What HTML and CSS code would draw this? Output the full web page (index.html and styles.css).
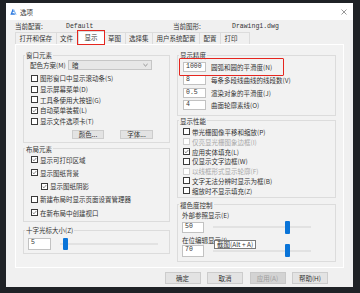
FILE: index.html
```
<!DOCTYPE html>
<html lang="zh-CN">
<head>
    <meta charset="UTF-8">
    <meta name="viewport" content="width=device-width, initial-scale=1.0">
    <title>选项</title>
    <link rel="stylesheet" href="styles.css">
</head>
<body>
    <div class="dialog">
        <div class="titlebar">
            <svg class="app-icon" viewBox="0 0 8 8">
                <path d="M0.4 7.6 L3.1 0.8 L4.6 4.4 L3.3 4.4 L2.7 6 L5.2 6 L5.7 7.6 Z" fill="#2b78df"/>
                <path d="M4.3 0.8 L7.6 7.6 L6.3 7.6 L3.8 2.2 Z" fill="#74afef"/>
            </svg>
            <span class="title">选项</span>
            <svg class="close" viewBox="0 0 6 6">
                <path d="M0.5 0.5 L5.5 5.5 M5.5 0.5 L0.5 5.5" stroke="#6b6b6b" stroke-width="0.7"/>
            </svg>
        </div>

        <div class="profile">
            <span class="profile-label">当前配置:</span>
            <span class="profile-value">Default</span>
            <span class="profile-label wide">当前图形:</span>
            <span class="profile-value">Drawing1.dwg</span>
        </div>

        <div class="tabs">
            <div class="tab">打开和保存</div>
            <div class="tab">文件</div>
            <div class="tab active">显示</div>
            <div class="tab">草图</div>
            <div class="tab">选择集</div>
            <div class="tab">用户系统配置</div>
            <div class="tab">配置</div>
            <div class="tab last">打印</div>
        </div>

        <div class="panel">
            <!-- left column -->
            <div class="col col-left">
                <fieldset class="group g-window">
                    <legend>窗口元素</legend>
                    <div class="scheme-row">
                        <span class="scheme-label">配色方案(M)</span>
                        <div class="select">
                            <span>暗</span>
                            <svg class="chevron" viewBox="0 0 6 4"><path d="M0.5 0.8 L3 3.2 L5.5 0.8" fill="none" stroke="#555" stroke-width="0.7"/></svg>
                        </div>
                    </div>
                    <div class="check-list">
                        <div class="check"><span class="box"></span><span>图形窗口中显示滚动条(S)</span></div>
                        <div class="check"><span class="box"></span><span>显示屏幕菜单(D)</span></div>
                        <div class="check"><span class="box"></span><span>工具条使用大按钮(G)</span></div>
                        <div class="check"><span class="box"><svg viewBox="0 0 7 7"><path d="M1 3.6 L2.8 5.3 L6 1.4" fill="none" stroke="#333" stroke-width="0.8"/></svg></span><span>自动菜单装载(L)</span></div>
                        <div class="check"><span class="box"></span><span>显示文件选项卡(T)</span></div>
                    </div>
                    <div class="btn-row">
                        <div class="btn">颜色...</div>
                        <div class="btn">字体...</div>
                    </div>
                </fieldset>

                <fieldset class="group g-layout">
                    <legend>布局元素</legend>
                    <div class="check"><span class="box"><svg viewBox="0 0 7 7"><path d="M1 3.6 L2.8 5.3 L6 1.4" fill="none" stroke="#333" stroke-width="0.8"/></svg></span><span>显示可打印区域</span></div>
                    <div class="check"><span class="box"><svg viewBox="0 0 7 7"><path d="M1 3.6 L2.8 5.3 L6 1.4" fill="none" stroke="#333" stroke-width="0.8"/></svg></span><span>显示图纸背景</span></div>
                    <div class="check sub"><span class="box"><svg viewBox="0 0 7 7"><path d="M1 3.6 L2.8 5.3 L6 1.4" fill="none" stroke="#333" stroke-width="0.8"/></svg></span><span>显示图纸阴影</span></div>
                    <div class="check"><span class="box"></span><span>新建布局时显示页面设置管理器</span></div>
                    <div class="check"><span class="box"><svg viewBox="0 0 7 7"><path d="M1 3.6 L2.8 5.3 L6 1.4" fill="none" stroke="#333" stroke-width="0.8"/></svg></span><span>在新布局中创建视口</span></div>
                </fieldset>

                <fieldset class="group g-cursor">
                    <legend>十字光标大小(Z)</legend>
                    <div class="slider-row">
                        <div class="field">5</div>
                        <div class="track"><div class="thumb" style="margin-left: 3px"></div></div>
                    </div>
                </fieldset>
            </div>

            <!-- right column -->
            <div class="col col-right">
                <fieldset class="group g-precision">
                    <legend>显示精度</legend>
                    <div class="prec-row hl"><div class="field">1000</div><span>圆弧和圆的平滑度(N)</span></div>
                    <div class="prec-row"><div class="field">8</div><span>每条多段线曲线的线段数(V)</span></div>
                    <div class="prec-row"><div class="field">0.5</div><span>渲染对象的平滑度(J)</span></div>
                    <div class="prec-row"><div class="field">4</div><span>曲面轮廓素线(O)</span></div>
                </fieldset>

                <fieldset class="group g-perf">
                    <legend>显示性能</legend>
                    <div class="check"><span class="box"></span><span>带光栅图像平移和缩放(P)</span></div>
                    <div class="check disabled"><span class="box"></span><span>仅亮显光栅图象边框(I)</span></div>
                    <div class="check"><span class="box"><svg viewBox="0 0 7 7"><path d="M1 3.6 L2.8 5.3 L6 1.4" fill="none" stroke="#333" stroke-width="0.8"/></svg></span><span>应用实体填充(L)</span></div>
                    <div class="check"><span class="box"></span><span>仅显示文字边框(W)</span></div>
                    <div class="check disabled"><span class="box"></span><span>以线框形式显示轮廓(F)</span></div>
                    <div class="check"><span class="box"></span><span>文字无法分辨时显示为框(B)</span></div>
                    <div class="check"><span class="box"></span><span>缩放时不显示填充(Z)</span></div>
                </fieldset>

                <fieldset class="group g-fade">
                    <legend>褪色度控制</legend>
                    <div class="fade-label">外部参照显示(E)</div>
                    <div class="slider-row">
                        <div class="field">50</div>
                        <div class="track"><div class="thumb" style="margin-left: 72px"></div></div>
                    </div>
                    <div class="fade-label tip-anchor">
                        在位编辑显示(I)
                        <div class="tooltip">截图(Alt + A)</div>
                    </div>
                    <div class="slider-row second">
                        <div class="field">70</div>
                        <div class="track"><div class="thumb" style="margin-left: 72px"></div></div>
                    </div>
                </fieldset>
            </div>
        </div>

        <div class="footer">
            <div class="btn">确定</div>
            <div class="btn">取消</div>
            <div class="btn disabled">应用(A)</div>
            <div class="btn">帮助(H)</div>
        </div>
    </div>
</body>
</html>
```

FILE: styles.css
```
* {
    box-sizing: border-box;
}
body {
    margin: 0;
    padding: 3px 0 0 6px;
    width: 360px;
    height: 293px;
    overflow: hidden;
    background-color: #1f2226;
    font-family: "Noto Sans CJK SC", "Liberation Sans", sans-serif;
    font-size: 6.5px;
    color: #333;
}
.dialog {
    width: 347px;
    height: 284px;
    background-color: #f0f0f0;
    display: flex;
    flex-direction: column;
}

/* title bar */
.titlebar {
    height: 17px;
    flex-shrink: 0;
    background-color: #fff;
    display: flex;
    align-items: center;
    padding: 0 6px 0 4px;
}
.app-icon {
    width: 7px;
    height: 7px;
    margin-right: 3px;
}
.title {
    flex: 1;
    color: #333;
}
.close {
    width: 6px;
    height: 6px;
}

/* current profile line */
.profile {
    display: flex;
    height: 9px;
    line-height: 9px;
    margin: 2px 0 0 9px;
    flex-shrink: 0;
}
.profile-label {
    width: 51px;
}
.profile-label.wide {
    width: 59px;
}
.profile-value {
    width: 107px;
    font-family: "Liberation Mono", monospace;
    font-size: 6.5px;
}

/* tabs */
.tabs {
    display: flex;
    align-items: flex-end;
    height: 13px;
    margin-left: 9px;
    flex-shrink: 0;
}
.tab {
    height: 12px;
    line-height: 11px;
    padding: 0 3.5px;
    border: 1px solid #dcdcdc;
    border-bottom: none;
    border-right: none;
    color: #333;
}
.tab.last {
    border-right: 1px solid #dcdcdc;
    padding-right: 11px;
}
.tab.active {
    position: relative;
    z-index: 1;
    height: 13px;
    padding: 0 6px;
    margin-left: 1px;
    background-color: #fff;
    outline: 1.7px solid #e5261f;
}

/* tab page */
.panel {
    margin: 0 9px;
    height: 224px;
    flex-shrink: 0;
    border: 1px solid #fff;
    background-color: #f2f2f2;
    display: flex;
    gap: 7px;
    padding: 6px 7px 0 7px;
}
.col {
    display: flex;
    flex-direction: column;
}
.col-left {
    width: 147px;
}
.col-right {
    width: 159px;
}

.group {
    --pad: 7px;
    margin: 0;
    min-width: 0;
    border: 1px solid #dcdcdc;
    padding: 0 4px 3px var(--pad);
}
.group legend {
    padding: 0 1px;
    margin-left: calc(1px - var(--pad));
    line-height: 8px;
    color: #333;
}

/* window elements */
.g-window {
    padding-top: 1px;
}
.scheme-row {
    display: flex;
    align-items: center;
    height: 10px;
}
.scheme-label {
    width: 38px;
    margin-left: -1px;
}
.select {
    width: 84px;
    height: 10px;
    border: 1px solid #c6c6c6;
    background-color: #e7e7e7;
    display: flex;
    align-items: center;
    justify-content: space-between;
    padding: 0 3px;
}
.chevron {
    width: 5px;
    height: 4px;
}
.check-list {
    margin-top: 3px;
}
.check {
    display: flex;
    align-items: center;
    gap: 2px;
    height: 10.7px;
}
.box {
    width: 7px;
    height: 7px;
    flex-shrink: 0;
    border: 1px solid #3a3a3a;
    background-color: #fff;
    display: flex;
}
.box svg {
    width: 5px;
    height: 5px;
}
.check.disabled {
    color: #a8a8a8;
}
.check.disabled .box {
    border-color: #cfcfcf;
}
.btn-row {
    display: flex;
    gap: 16px;
    margin: 3.5px 0 0 41px;
}
.btn {
    height: 9px;
    width: 32px;
    border: 1px solid #cccccc;
    background-color: #e3e3e3;
    text-align: center;
    line-height: 7px;
    color: #333;
}
.btn-row .btn + .btn {
    width: 33px;
}

/* layout elements */
.g-layout {
    margin-top: 2px;
    padding-bottom: 2px;
}
.g-layout .check {
    height: 13.25px;
}
.check.sub {
    margin-left: 10px;
}

/* crosshair size */
.g-cursor {
    --pad: 4px;
    margin-top: 4px;
    padding-top: 4px;
}
.slider-row {
    display: flex;
    align-items: center;
    height: 12px;
}
.field {
    width: 23px;
    height: 12px;
    border: 1px solid #c2c2c2;
    background-color: #fff;
    padding-left: 2px;
    line-height: 8px;
    font-family: "Liberation Mono", monospace;
    font-size: 6.5px;
    color: #333;
}
.track {
    width: 98px;
    height: 12px;
    margin-left: 9px;
    display: flex;
    align-items: center;
    background: linear-gradient(#e2e2e2, #e2e2e2) center / 100% 2px no-repeat;
}
.thumb {
    width: 5px;
    height: 12px;
    border-radius: 1px;
    background-color: #0a74d8;
}

/* display precision */
.g-precision {
    --pad: 5px;
    padding-top: 2px;
}
.prec-row {
    display: flex;
    align-items: center;
    gap: 5px;
    height: 12.67px;
}
.prec-row .field {
    height: 10px;
    padding-top: 0;
    line-height: 8px;
}
.prec-row.hl {
    position: relative;
}
.prec-row.hl::after {
    content: "";
    position: absolute;
    left: -4px;
    top: -3px;
    width: 103px;
    height: 16px;
    border: 1.7px solid #e5261f;
    border-radius: 1px;
}

/* display performance */
.g-perf {
    --pad: 5px;
    margin-top: 1.3px;
    padding-top: 2px;
    padding-bottom: 1px;
}
.g-perf .check {
    height: 9.83px;
}

/* fade control */
.g-fade {
    --pad: 4px;
    margin-top: 3px;
    padding-top: 2px;
    padding-bottom: 4px;
}
.fade-label {
    height: 8px;
    line-height: 8px;
}
.g-fade .slider-row {
    height: 11px;
    margin-top: 3px;
}
.g-fade .slider-row.second {
    height: 12px;
    margin-top: 1px;
}
.g-fade .field {
    width: 22px;
    height: 11px;
}
.g-fade .slider-row.second .field {
    height: 12px;
}
.g-fade .thumb {
    height: 13px;
}
.tip-anchor {
    margin-top: 3px;
    position: relative;
}
.tooltip {
    position: absolute;
    left: 32px;
    top: 4px;
    height: 9px;
    line-height: 7px;
    padding: 0 2px;
    border: 1px solid #7a7a7a;
    background-color: #fff;
    white-space: nowrap;
    color: #333;
    z-index: 2;
}

/* dialog buttons */
.footer {
    display: flex;
    justify-content: flex-end;
    gap: 6.5px;
    padding-right: 25px;
    margin-top: 4px;
}
.footer .btn {
    width: 36px;
    height: 12px;
    line-height: 10px;
}
.footer .btn.disabled {
    background-color: #d3d3d3;
    border-color: #c8c8c8;
    color: #9c9c9c;
}
```
